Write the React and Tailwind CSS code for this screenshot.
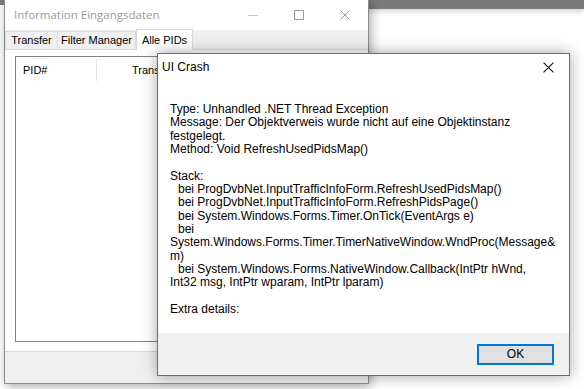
import React from 'react';

// [text, indented]
const lines = [
  ['Type: Unhandled .NET Thread Exception', false],
  ['Message: Der Objektverweis wurde nicht auf eine Objektinstanz', false],
  ['festgelegt.', false],
  ['Method: Void RefreshUsedPidsMap()', false],
  ['', false],
  ['Stack:', false],
  ['bei ProgDvbNet.InputTrafficInfoForm.RefreshUsedPidsMap()', true],
  ['bei ProgDvbNet.InputTrafficInfoForm.RefreshPidsPage()', true],
  ['bei System.Windows.Forms.Timer.OnTick(EventArgs e)', true],
  ['bei', true],
  ['System.Windows.Forms.Timer.TimerNativeWindow.WndProc(Message&', false],
  ['m)', false],
  ['bei System.Windows.Forms.NativeWindow.Callback(IntPtr hWnd,', true],
  ['Int32 msg, IntPtr wparam, IntPtr lparam)', false],
  ['', false],
  ['Extra details:', false],
];

const segoe = { fontFamily: '"Open Sans", "Noto Sans", sans-serif' };
const arial = { fontFamily: '"Liberation Sans", Arial, sans-serif' };

function XIcon({ size = 10, color = '#000' }) {
  return (
    <svg width={size} height={size} viewBox="0 0 10 10">
      <path d="M0.5 0.5 L9.5 9.5 M9.5 0.5 L0.5 9.5" stroke={color} strokeWidth="1" />
    </svg>
  );
}

function BackWindow() {
  return (
    <div className="absolute left-[4px] top-0 w-[365px] h-[384px] bg-white border-l border-r border-b border-[#8a8a8a] shadow-[2px_2px_10px_rgba(0,0,0,0.35)] flex flex-col">
      <div className="h-[30px] flex items-center justify-between pl-[9px] shrink-0">
        <span className="text-[11.5px] text-[#9a9a9a]" style={segoe}>Information Eingangsdaten</span>
        <div className="flex items-center h-full">
          <div className="w-[46px] h-full flex items-center justify-center">
            <div className="w-[10px] h-px bg-[#c8c8c8]" />
          </div>
          <div className="w-[46px] h-full flex items-center justify-center">
            <div className="w-[10px] h-[10px] border border-[#9a9a9a]" />
          </div>
          <div className="w-[46px] h-full flex items-center justify-center">
            <XIcon color="#9a9a9a" />
          </div>
        </div>
      </div>
      <div className="h-[20px] bg-[#f0f0f0] border-b border-[#d9d9d9] flex items-end shrink-0 relative text-[11px] text-black" style={arial}>
        <div className="w-[53px] h-[18px] flex items-center justify-center border border-b-0 border-[#d9d9d9]">Transfer</div>
        <div className="w-[78px] h-[18px] flex items-center justify-center border border-b-0 border-l-0 border-[#d9d9d9]">Filter Manager</div>
        <div className="w-[57px] h-[21px] flex items-center justify-center border border-b-0 border-[#d9d9d9] bg-white -mb-px relative z-10">Alle PIDs</div>
      </div>
      <div className="flex-1 px-[10px] pt-[6px] pb-[9px] border-b border-[#dadada]">
        <div className="h-full border border-[#828282] bg-white">
          <div className="h-[26px] flex text-[11px] text-black" style={arial}>
            <div className="w-[81px] flex items-center pl-[7px] border-r border-[#e5e5e5] my-[2px]">PID#</div>
            <div className="flex items-center pl-[35px] whitespace-nowrap">Trans</div>
          </div>
        </div>
      </div>
      <div className="h-[31px] bg-[#f0f0f0] shrink-0" />
    </div>
  );
}

function CrashDialog() {
  return (
    <div className="absolute left-[157px] top-[53px] w-[413px] h-[323px] bg-white border border-[#6e6e6e] shadow-[0_0_14px_rgba(0,0,0,0.35)] flex flex-col z-20" style={arial}>
      <div className="h-[26px] flex items-center justify-between pl-[4px] pr-[15px] shrink-0">
        <span className="text-[12px] text-black">UI Crash</span>
        <XIcon size={11} color="#111" />
      </div>
      <div className="flex-1 pl-[12px] pt-[23px] text-[12px] leading-[13.35px] text-black">
        {lines.map(([t, ind], i) => (
          <div key={i} className={ind ? 'whitespace-pre h-[13.35px] pl-[8px]' : 'whitespace-pre h-[13.35px]'}>{t}</div>
        ))}
      </div>
      <div className="h-[42px] bg-[#f0f0f0] flex items-center justify-end pr-[15px] shrink-0">
        <button className="w-[77px] h-[21px] bg-[#e1e1e1] border-2 border-[#0078d7] text-[12px] text-black flex items-center justify-center">OK</button>
      </div>
    </div>
  );
}

export default function App() {
  return (
    <div className="relative w-[584px] h-[389px] bg-white overflow-hidden">
      <div className="absolute left-0 top-0 w-[4px] h-[5px] bg-[#7a7a7a]" />
      <div className="absolute left-[369px] top-0 right-0 h-[9px] bg-[#7b7b7b] shadow-[0_2px_6px_rgba(0,0,0,0.2)]" />
      <BackWindow />
      <CrashDialog />
    </div>
  );
}
